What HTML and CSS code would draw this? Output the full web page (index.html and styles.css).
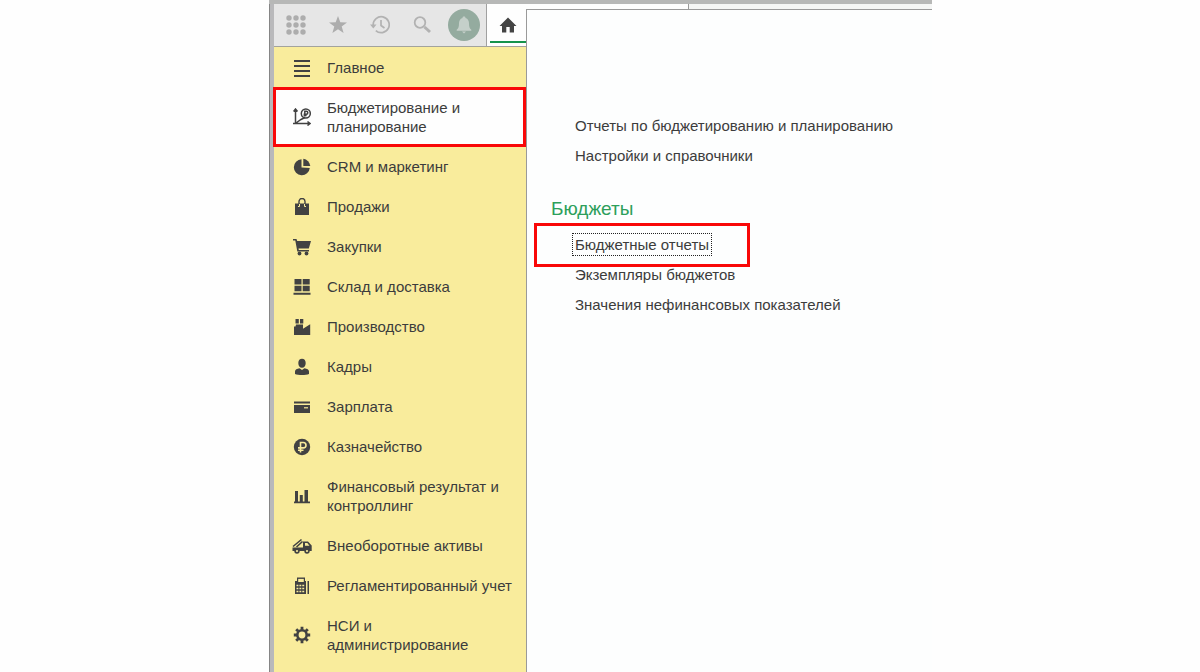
FILE: index.html
```html
<!DOCTYPE html>
<html lang="ru">
<head>
<meta charset="utf-8">
<title>Бюджетирование и планирование</title>
<link rel="stylesheet" href="styles.css">
</head>
<body>
<div class="window">
  <div class="side">
    <header class="toolbar">
      <div class="tools">
        <button class="tool" aria-label="Меню"><svg viewBox="0 0 20 20"><g fill="#adadad"><circle cx="3" cy="3" r="2.7"/><circle cx="10" cy="3" r="2.7"/><circle cx="17" cy="3" r="2.7"/><circle cx="3" cy="10" r="2.7"/><circle cx="10" cy="10" r="2.7"/><circle cx="17" cy="10" r="2.7"/><circle cx="3" cy="17" r="2.7"/><circle cx="10" cy="17" r="2.7"/><circle cx="17" cy="17" r="2.7"/></g></svg></button>
        <button class="tool" aria-label="Избранное"><svg viewBox="0 0 20 20"><path fill="#adadad" d="M10 1l2.300 6.300 6.700.2-5.300 4.100 1.900 6.500L10 14.300l-5.600 3.800 1.900-6.500L1 7.500l6.700-.2z"/></svg></button>
        <button class="tool" aria-label="История"><svg viewBox="0 0 20 20" fill="none" stroke="#b2b2b2" stroke-width="1.700"><path d="M3.200 10a8 8 0 1 1 2.600 5.600"/><path d="M11 5v5.500l3.500 2.500"/><path fill="#b2b2b2" stroke="none" d="M0 9.500h6.500l-3.200 4z"/></svg></button>
        <button class="tool" aria-label="Поиск"><svg viewBox="0 0 20 20" fill="none" stroke="#b2b2b2"><circle cx="8" cy="7.500" r="5.300" stroke-width="1.800"/><path stroke-width="3" d="M12.500 12l5.500 5"/></svg></button>
        <button class="tool bell" aria-label="Уведомления"><svg viewBox="0 0 20 20"><path fill="#c5d0ca" d="M10 1.500c.9 0 1.500.5 1.500 1.400 2.600.8 3.500 3 3.500 5.600 0 3.500.7 4.800 2.300 6.200v1H2.700v-1C4.300 13.300 5 12 5 8.500c0-2.600.9-4.800 3.500-5.600 0-.9.6-1.400 1.500-1.400zM8 16.500h4l-2 2z"/></svg></button>
      </div>
      <button class="home" aria-label="Начальная страница"><svg viewBox="0 0 20 20"><path fill="#444" d="M10 2.500L1.500 11H4v6.500h4.300V12h3.400v5.500H16V11h2.500z"/></svg></button>
    </header>
    <nav class="menu">
      <a class="item" href="#"><svg viewBox="0 0 18 18"><path stroke="#424242" stroke-width="2" d="M1 2h16M1 7h16M1 12h16M1 17h16"/></svg><span>Главное</span></a>
      <a class="item current" href="#"><svg viewBox="0 0 18 18" fill="none" stroke="#424242" stroke-width="1.500"><path d="M2.500 1v14.500H17M0 15.500h3M.5 3.500l2-2.500 2 2.500M14.500 13.500l2.500 2-2.500 2M3 15l5-3.500 4-2"/><circle cx="12.800" cy="5.500" r="4.500"/><path d="M11.800 8.500V3.300h1.500a1.500 1.500 0 0 1 0 3h-2.700M10.600 7.600h3"/></svg><span>Бюджетирование и планирование</span></a>
      <a class="item" href="#"><svg viewBox="0 0 18 18" fill="#424242"><path d="M8.500 1.200A8 8 0 1 0 16.800 10l-8.300-.5z"/><path d="M10.300.8a8 8 0 0 1 7 7.200h-7z"/></svg><span>CRM и маркетинг</span></a>
      <a class="item" href="#"><svg viewBox="0 0 18 18"><path fill="#424242" d="M2 5.500h14V17H2z"/><path fill="none" stroke="#424242" stroke-width="1.400" d="M6 6V3.500a3 3 0 0 1 6 0V6"/><path fill="none" stroke="#f9ec9c" stroke-width="1" d="M5 8.500h1.500V6M13 8.500h-1.500V6"/></svg><span>Продажи</span></a>
      <a class="item" href="#"><svg viewBox="0 0 18 18" fill="#424242"><path d="M0 1h3.500l.7 2H18l-2.200 7.500H5.500l.3 1.500H16v1.500H4.300L2.300 2.500H0z"/><circle cx="6.500" cy="15.500" r="1.900"/><circle cx="13.500" cy="15.500" r="1.900"/></svg><span>Закупки</span></a>
      <a class="item" href="#"><svg viewBox="0 0 18 18" fill="#424242"><path d="M1.500 1h7v5.500h-7zM9.700 1h7v5.500h-7zM1.500 7.700h7v5.500h-7zM9.700 7.700h7v5.500h-7zM.5 14.700h17v2H.5z"/></svg><span>Склад и доставка</span></a>
      <a class="item" href="#"><svg viewBox="0 0 18 18" fill="#424242"><path d="M1 17V8.500h1.500L3 6.500h7v4.300l7.200-4.500V17zM2.500 1h3.300v4.500H2.500zM7 1h3.300v4.500H7z"/></svg><span>Производство</span></a>
      <a class="item" href="#"><svg viewBox="0 0 18 18" fill="#424242"><path d="M5.300 5c0-2.700 1.500-4.200 3.700-4.200S12.700 2.300 12.700 5 11.200 9.800 9 9.800 5.300 7.700 5.300 5zM2 16v-2.500c0-2 2-2.800 4.500-3.300L9 12l2.500-1.800c2.500.5 4.500 1.300 4.500 3.300V16c-3 1.300-11 1.300-14 0z"/></svg><span>Кадры</span></a>
      <a class="item" href="#"><svg viewBox="0 0 18 18" fill="#424242"><path d="M1 3.500h16v2H1zM1 7h16v8H1z"/><path fill="#f9ec9c" d="M11 9.200h4v1.200h-4z"/></svg><span>Зарплата</span></a>
      <a class="item" href="#"><svg viewBox="0 0 18 18"><circle cx="9" cy="9" r="8.200" fill="#424242"/><path fill="none" stroke="#f9ec9c" stroke-width="1.600" d="M7.500 14.500V4.500h2.800a2.700 2.700 0 0 1 0 5.400H5M5 12.200h5.500"/></svg><span>Казначейство</span></a>
      <a class="item" href="#"><svg viewBox="0 0 18 18" fill="#424242"><path d="M1 14.500h16v1.700H1zM2 4h3v11H2zM6.800 8h3v7h-3zM11.500 3h3.500v12h-3.500z"/></svg><span>Финансовый результат и контроллинг</span></a>
      <a class="item" href="#"><svg viewBox="0 0 18 18" overflow="visible"><path fill="#424242" d="M-.5 10.500H10V4.500h5l3.700 4v5.500H-.5z"/><path fill="none" stroke="#424242" stroke-width="1.600" d="M0 9.500l8.500-7M3.500 10l6-5.500"/><path fill="#f9ec9c" d="M12 6h2.300l2.200 2.700H12z"/><g fill="#f9ec9c" stroke="#424242" stroke-width="1.600"><circle cx="4" cy="14" r="1.900"/><circle cx="14" cy="14" r="1.900"/></g></svg><span>Внеоборотные активы</span></a>
      <a class="item" href="#"><svg viewBox="0 0 18 18"><path fill="#424242" d="M4 .5h8V4h1v13H2V4h2zM14.500 4H16v13h-1.500z"/><path fill="#f9ec9c" d="M5.200 1.900h5.600V5H5.200z"/><path stroke="#f9ec9c" stroke-width="1.400" stroke-dasharray="1.900 1" d="M3.500 8.500h8.300M3.500 11.500h8.300M3.500 14.500h8.300"/></svg><span>Регламентированный учет</span></a>
      <a class="item" href="#"><svg viewBox="0 0 18 18" fill="none" stroke="#424242"><circle cx="9" cy="9" r="4.700" stroke-width="2.600"/><path stroke-width="2.800" d="M9 .8v3M9 14.200v3M.8 9h3M14.200 9h3M3.200 3.200l2.100 2.100M12.700 12.700l2.100 2.100M3.200 14.800l2.100-2.100M12.700 5.300l2.100-2.100"/></svg><span>НСИ и администрирование</span></a>
    </nav>
  </div>
  <main class="content">
    <div class="tabs"><span class="tab"></span><span class="tabrest"></span></div>
    <section class="panel">
      <a class="link" href="#">Отчеты по бюджетированию и планированию</a>
      <a class="link" href="#">Настройки и справочники</a>
      <h2 class="heading">Бюджеты</h2>
      <a class="link marked" href="#"><span class="focus">Бюджетные отчеты</span></a>
      <a class="link" href="#">Экземпляры бюджетов</a>
      <a class="link" href="#">Значения нефинансовых показателей</a>
    </section>
  </main>
</div>
</body>
</html>
```
FILE: styles.css
```css
* { box-sizing: border-box; }
body {
  margin: 0;
  padding: 0 268px 0 269px;
  background: #fefefe;
  color: #3c3c3c;
  font: 15px/19px "Liberation Sans", Arial, sans-serif;
}
a { color: inherit; text-decoration: none; }
button { margin: 0; padding: 0; border: 0; background: none; }
svg { display: block; }
.window {
  display: flex;
  min-height: 100vh;
  border-top: 4px solid #b7b8b7;
}
.side {
  flex: none;
  display: flex;
  flex-direction: column;
  width: 257px;
  padding-left: 4px;
  border-left: 1px solid #858585;
  background: linear-gradient(90deg, #b9b9bb 4px, #f9ec9c 4px);
}
.toolbar {
  display: flex;
  height: 43px;
  border-bottom: 1px solid #a3a39c;
  background: #e6e6e6;
}
.tools {
  flex: 1;
  display: flex;
  align-items: center;
  gap: 10px;
  padding-left: 6px;
  border-right: 1px solid #a0a0a0;
}
.tool {
  flex: none;
  display: grid;
  place-items: center;
  width: 32px;
  height: 32px;
}
.tool svg, .home svg { width: 20px; height: 20px; }
.bell {
  border-radius: 50%;
  background: #94ab9f;
}
.home {
  flex: none;
  display: grid;
  place-items: center;
  width: 39px;
  padding-left: 3px;
  background: linear-gradient(#16934b, #16934b) 3px 37px / 100% 2px no-repeat #fefefe;
}
.menu { padding-top: 1px; }
.item {
  position: relative;
  display: flex;
  align-items: center;
  gap: 16px;
  padding: 10px 12px 11px 19px;
}
.item svg { flex: none; width: 18px; height: 18px; }
.current { background: #fefefe; }
.current::after {
  content: "";
  position: absolute;
  inset: -1px 0 0 -1px;
  border: 3px solid #f90808;
}
.content {
  flex: 1;
  min-width: 0;
  display: flex;
  flex-direction: column;
}
.tabs { display: flex; height: 5px; }
.tab { width: 163px; border-right: 1px solid #9a9a9a; }
.tabrest { flex: 1; background: #f5f6f5; }
.panel {
  flex: 1;
  display: flex;
  flex-direction: column;
  align-items: flex-start;
  padding: 101px 0 0 24px;
  border: solid #9a9a9a;
  border-width: 1px 0 0 1px;
  background: #fdfefe;
}
.link {
  position: relative;
  padding-left: 24px;
  line-height: 30px;
  white-space: nowrap;
}
.heading {
  margin: 23px 0 6px;
  color: #2d9f5b;
  font-size: 19px;
  font-weight: 400;
  line-height: 30px;
}
.focus { outline: 1px dotted #222; outline-offset: 2px; }
.marked::after {
  content: "";
  position: absolute;
  inset: -7px -41px -7px -17px;
  border: 3px solid #f90808;
}
```
